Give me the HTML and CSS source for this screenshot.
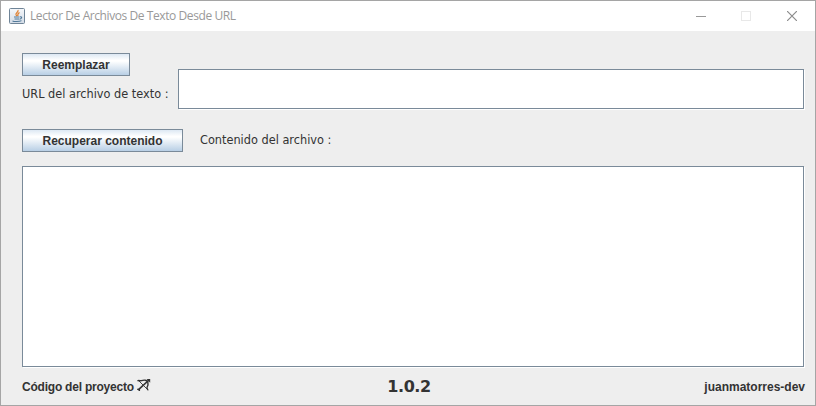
FILE: index.html
```html
<!DOCTYPE html>
<html lang="es">
<head>
<meta charset="utf-8">
<title>Lector De Archivos De Texto Desde URL</title>
<link rel="stylesheet" href="styles.css">
</head>
<body>
<div class="window">
  <header class="titlebar">
    <svg class="app-icon" width="16" height="16" viewBox="0 0 16 16" fill="none">
      <defs><linearGradient id="tile" x1="0" y1="0" x2="0" y2="1"><stop offset="0" stop-color="#f5f7fa"/><stop offset="1" stop-color="#d2dbe6"/></linearGradient></defs>
      <rect x=".5" y=".5" width="15" height="15" rx="1" fill="url(#tile)" stroke="#6f8497"/>
      <path d="M9 2C10 4 6 5 7 7l1 1M10.500 4.500C8.500 5.500 8.500 6.500 9 8" stroke="#e08030" stroke-width="1.200"/>
      <path d="M5 9h5.500M5.500 11h4.500M11 8.700c2.500-.2 2 2-.5 2.600M3.500 12.800c1 1 7 1 9-.2" stroke="#507898" stroke-width="1.100"/>
    </svg>
    <span class="title">Lector De Archivos De Texto Desde URL</span>
    <div class="controls">
      <svg width="10" height="10" viewBox="0 0 10 10"><path d="M0 5.500h10" stroke="#999"/></svg>
      <svg width="10" height="10" viewBox="0 0 10 10"><rect x=".5" y=".5" width="9" height="9" fill="none" stroke="#e8e8e8"/></svg>
      <svg class="close" width="10" height="10" viewBox="0 0 10 10"><path d="M0 0l10 10M10 0L0 10" stroke="#8c8c8c" stroke-width="1.200"/></svg>
    </div>
  </header>
  <main class="content">
    <section class="url-row">
      <div class="url-side">
        <button class="button replace">Reemplazar</button>
        <label class="label url-label" for="url">URL del archivo de texto :</label>
      </div>
      <input class="field" id="url" type="text">
    </section>
    <section class="fetch-row">
      <button class="button fetch">Recuperar contenido</button>
      <label class="label content-label" for="text">Contenido del archivo :</label>
    </section>
    <textarea class="field output" id="text"></textarea>
    <footer class="footer">
      <span class="project"><span class="project-text">Código del proyecto</span>
        <svg class="bow" width="14" height="14" viewBox="0 0 14 14" fill="none" stroke="#333"><path d="M1 12.200L12 2" stroke-width="1.700"/><path d="M9.500 1h3.700v3.700z" fill="#333" stroke="none"/><path d="M.5 3c1.500-1.200 2.500.2 4-.3C7 1.600 10 2 10.800 4c.7 2.500 0 4-.8 5.500-.5 1.200 1 1.500.8 2.800" stroke-width="1.400"/><path d="M2 3l8.500 8.500" stroke-width=".9"/><path d="M0 11.300h2.500v1.700" stroke-width="1.100"/></svg>
      </span>
      <span class="version">1.0.2</span>
      <span class="author">juanmatorres-dev</span>
    </footer>
  </main>
</div>
</body>
</html>
```
FILE: styles.css
```css
* { box-sizing: border-box; }
body { margin: 0; }
.window {
  width: 816px; height: 406px;
  display: flex; flex-direction: column;
  border: 1px solid #a5a5a5;
  background: #eee; color: #333;
  font: bold 12px/16px "Liberation Sans", sans-serif;
  white-space: nowrap;
}
.titlebar {
  height: 30px; flex: none;
  display: flex; align-items: center;
  padding: 0 18px 0 8px;
  background: #fff;
}
.app-icon { display: block; margin-right: 5px; }
.title { font: 12px/16px "Open Sans", sans-serif; color: #999; letter-spacing: -0.42px; }
.controls { margin-left: auto; display: flex; gap: 35px; }
.controls svg { display: block; }
.controls .close { margin-left: 1px; }
.content { flex: 1; display: flex; flex-direction: column; padding: 22px 11px 0 21px; }
.url-row { display: flex; align-items: flex-end; height: 56px; }
.url-side { width: 156px; height: 56px; display: flex; flex-direction: column; align-items: flex-start; gap: 10px; }
.button {
  height: 23px; padding: 0;
  border: 1px solid #7a8a99;
  background: linear-gradient(#dde8f3 0, #fff 30%, #fff 34%, #b8cfe5 100%);
  color: #333; font: bold 12px/16px "Liberation Sans", sans-serif;
}
.replace { width: 108px; }
.fetch { width: 161px; }
.label { font: 12.6px/16px "DejaVu Sans Condensed", "DejaVu Sans", sans-serif; font-stretch: condensed; }
.field {
  height: 40px; flex: 1; margin: 0; padding: 2px;
  border: 1px solid #7a8a99; border-radius: 0;
  background: #fff; box-shadow: 1px 1px 0 #fff;
  outline: none; resize: none;
}
.fetch-row { display: flex; align-items: center; gap: 17px; height: 23px; margin-top: 20px; }
.content-label { margin-top: -1px; }
.output { flex: none; height: 201px; margin-top: 14px; }
.footer {
  display: grid; grid-template-columns: 1fr auto 1fr; align-items: center;
  height: 40px; margin-right: -1px;
}
.project { display: flex; gap: 3px; }
.project-text { letter-spacing: -0.22px; }
.bow { margin-top: -1px; }
.version { font: bold 16px/20px "DejaVu Sans", sans-serif; letter-spacing: -0.4px; margin-right: 9px; }
.author { justify-self: end; }
```
